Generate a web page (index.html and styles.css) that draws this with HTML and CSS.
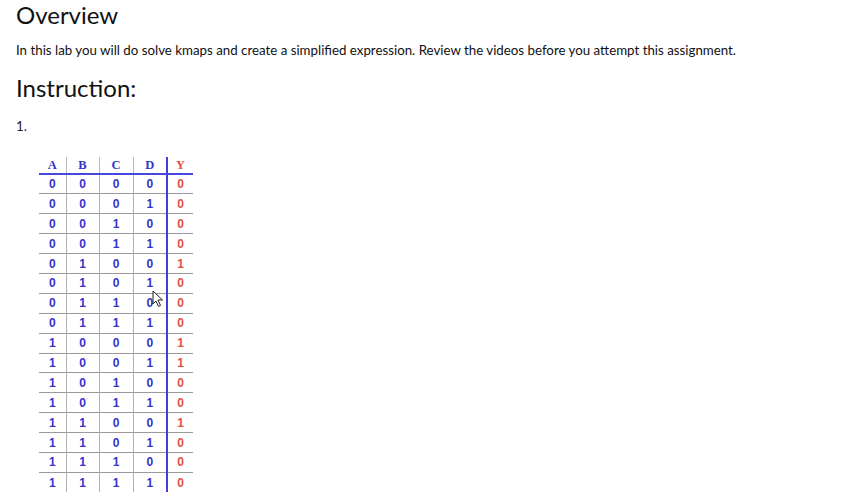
FILE: index.html
```html
<!DOCTYPE html>
<html lang="en">
<head>
    <meta charset="utf-8">
    <title>Overview</title>
    <link rel="stylesheet" href="styles.css">
</head>
<body>
    <div class="page">
        <h2 class="heading">Overview</h2>
        <p class="intro">In this lab you will do solve kmaps and create a simplified expression. Review the videos before you attempt this assignment.</p>
        <h2 class="heading">Instruction:</h2>
        <p class="step">1.</p>

        <div class="truth">
            <table class="truth-table">
                <thead>
                    <tr><th>A</th><th>B</th><th>C</th><th class="last-in">D</th><th class="out">Y</th></tr>
                </thead>
                <tbody>
                    <tr><td>0</td><td>0</td><td>0</td><td class="last-in">0</td><td class="out">0</td></tr>
                    <tr><td>0</td><td>0</td><td>0</td><td class="last-in">1</td><td class="out">0</td></tr>
                    <tr><td>0</td><td>0</td><td>1</td><td class="last-in">0</td><td class="out">0</td></tr>
                    <tr><td>0</td><td>0</td><td>1</td><td class="last-in">1</td><td class="out">0</td></tr>
                    <tr><td>0</td><td>1</td><td>0</td><td class="last-in">0</td><td class="out">1</td></tr>
                    <tr><td>0</td><td>1</td><td>0</td><td class="last-in">1</td><td class="out">0</td></tr>
                    <tr><td>0</td><td>1</td><td>1</td><td class="last-in">0</td><td class="out">0</td></tr>
                    <tr><td>0</td><td>1</td><td>1</td><td class="last-in">1</td><td class="out">0</td></tr>
                    <tr><td>1</td><td>0</td><td>0</td><td class="last-in">0</td><td class="out">1</td></tr>
                    <tr><td>1</td><td>0</td><td>0</td><td class="last-in">1</td><td class="out">1</td></tr>
                    <tr><td>1</td><td>0</td><td>1</td><td class="last-in">0</td><td class="out">0</td></tr>
                    <tr><td>1</td><td>0</td><td>1</td><td class="last-in">1</td><td class="out">0</td></tr>
                    <tr><td>1</td><td>1</td><td>0</td><td class="last-in">0</td><td class="out">1</td></tr>
                    <tr><td>1</td><td>1</td><td>0</td><td class="last-in">1</td><td class="out">0</td></tr>
                    <tr><td>1</td><td>1</td><td>1</td><td class="last-in">0</td><td class="out">0</td></tr>
                    <tr><td>1</td><td>1</td><td>1</td><td class="last-in">1</td><td class="out">0</td></tr>
                </tbody>
            </table>
            <svg class="cursor" width="12" height="18" viewBox="0 0 12 18">
                <path d="M1 1 L1 14 L4 11 L6.5 16.5 L8.5 15.5 L6 10 L10.5 10 Z" fill="#fff" stroke="#222" stroke-width="1" stroke-linejoin="round"/>
            </svg>
        </div>
    </div>
</body>
</html>
```

FILE: styles.css
```css
* {
    box-sizing: border-box;
}

body {
    margin: 0;
    background: #fff;
    color: #2d3b45;
    font-family: Lato, 'Open Sans', sans-serif;
}

.page {
    padding: 0 16px;
}

.heading {
    margin: 0;
    font-weight: 400;
    font-size: 24px;
    line-height: 28px;
    color: #111;
}

.heading:first-child {
    margin-top: 1px;
}

.intro {
    margin: 12px 0 15px;
    font-size: 13.3px;
    line-height: 18px;
    color: #111;
}

.step {
    margin: 15px 0 0;
    font-size: 13.3px;
    line-height: 18px;
    color: #222;
}

.truth {
    position: relative;
    width: 160px;
    margin: 22px 0 0 23px;
}

.truth-table {
    border-collapse: collapse;
    font-family: 'Liberation Sans', Arial, sans-serif;
    font-weight: 700;
    font-size: 12px;
    color: #3434cc;
}

.truth-table th {
    height: 17px;
    padding: 0;
    font-family: 'Liberation Serif', 'Times New Roman', serif;
    font-size: 12.5px;
    font-weight: 700;
    border-bottom: 2px solid #4646e0;
    border-left: 1px solid #b8b8b8;
    vertical-align: middle;
}

.truth-table td {
    height: 19.9px;
    padding: 0;
    text-align: center;
    border-top: 1px solid #9a9a9a;
    border-left: 1px solid #b0b0b0;
}

.truth-table tbody tr:first-child td {
    border-top: none;
}

.truth-table th:first-child,
.truth-table td:first-child {
    width: 27px;
    border-left: none;
}

.truth-table th:nth-child(2),
.truth-table td:nth-child(2) {
    width: 33px;
}

.truth-table th:nth-child(3),
.truth-table td:nth-child(3),
.truth-table .last-in {
    width: 34px;
}

.truth-table .out {
    width: 26px;
    color: #e2503e;
    border-left: 2px solid #3f3fe0;
}

.cursor {
    position: absolute;
    left: 113px;
    top: 133px;
}
```
